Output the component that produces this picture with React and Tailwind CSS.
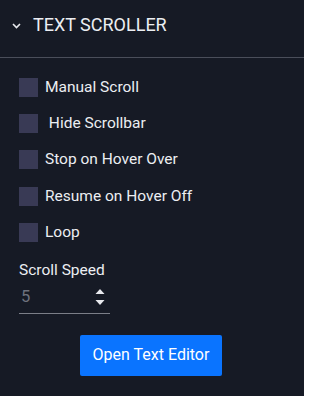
import React from "react";

function Row({ label }) {
  return (
    <div className="flex items-center h-[36.4px]">
      <div className="w-[19px] h-[19px] bg-[#393a55] shrink-0" />
      <span className="ml-[7px] text-[15.5px] text-[#eceef2] whitespace-pre">{label}</span>
    </div>
  );
}

export default function App() {
  return (
    <div className="w-[304px] h-[396px] bg-[#161a25] overflow-hidden antialiased" style={{ fontFamily: "Roboto, 'Liberation Sans', sans-serif" }}>
      <div className="h-[58px] flex items-center border-b border-[#4a4e5a]">
        <svg width="9" height="6" viewBox="0 0 9 6" className="ml-[12px] mb-[6px]">
          <path d="M1 1 L4.5 4.5 L8 1" stroke="#e8e9ee" strokeWidth="1.6" fill="none" />
        </svg>
        <span className="ml-[12px] text-[18px] text-[#eceef2] mb-[8px]">TEXT SCROLLER</span>
      </div>
      <div className="pl-[19px] pt-[11px]">
        <Row label="Manual Scroll" />
        <Row label=" Hide Scrollbar" />
        <Row label="Stop on Hover Over" />
        <Row label="Resume on Hover Off" />
        <Row label="Loop" />
        <div className="mt-[9px] text-[15.5px] text-[#eceef2] leading-[20px]">Scroll Speed</div>
        <div className="w-[91px] h-[33px] mt-[1px] border-b border-[#7b7e88] flex items-center justify-between">
          <span className="ml-[2px] text-[16.5px] text-[#6d717c]">5</span>
          <svg width="10" height="18" viewBox="0 0 10 18" className="mr-[5px]">
            <path d="M5 1 L9.5 6 L0.5 6 Z" fill="#e8e9ee" />
            <path d="M0.5 12 L9.5 12 L5 17 Z" fill="#e8e9ee" />
          </svg>
        </div>
      </div>
      <div className="flex justify-center mt-[21px]">
        <button className="w-[142px] h-[41px] ml-[-2px] bg-[#0a74ff] rounded-[2px] text-white text-[16px]">Open Text Editor</button>
      </div>
    </div>
  );
}
